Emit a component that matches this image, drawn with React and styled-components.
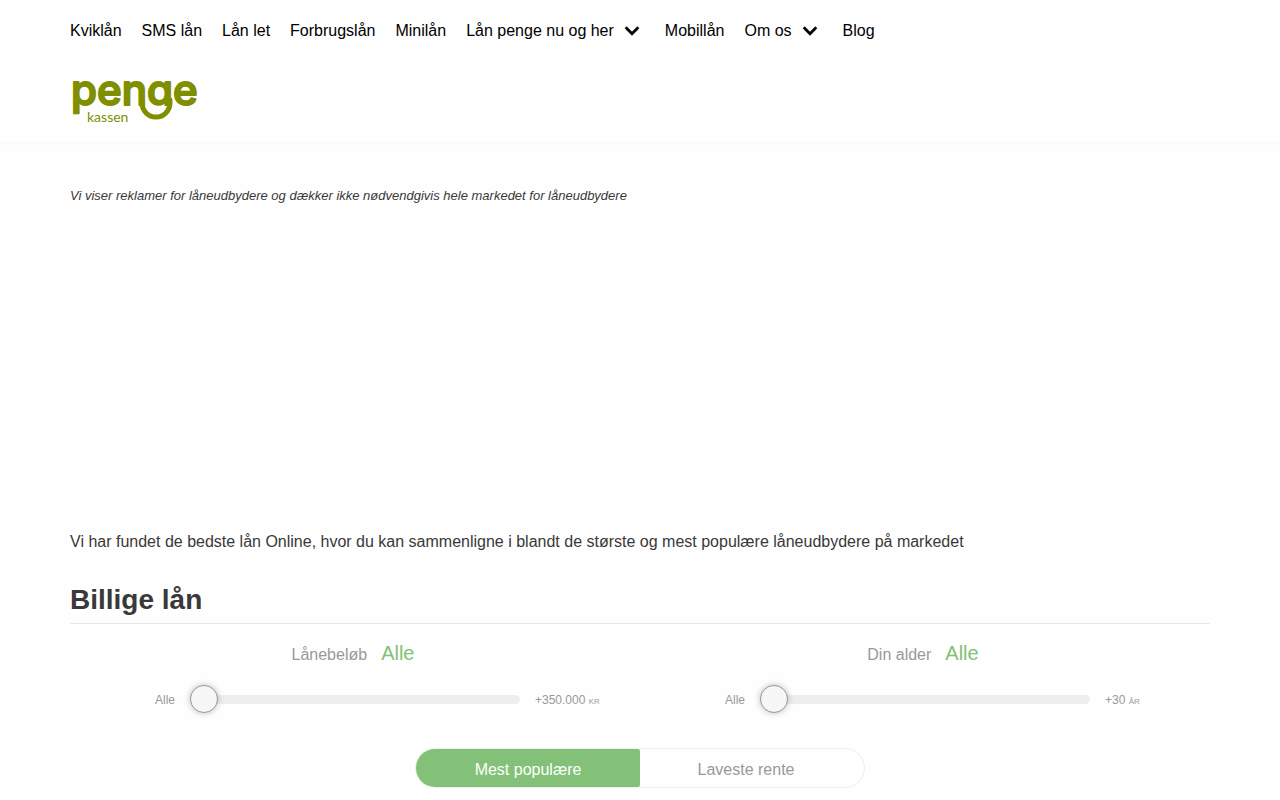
import React from "react";
import styled, { createGlobalStyle } from "styled-components";
import { FaChevronDown } from "react-icons/fa";

const GlobalStyle = createGlobalStyle`
  *, *::before, *::after { box-sizing: border-box; }
  body {
    margin: 0;
    background: #fefefe;
    color: #393939;
    font-family: "Liberation Sans", Arial, sans-serif;
    font-size: 16px;
    line-height: 24px;
  }
`;

const Container = styled.div`
  max-width: 1170px;
  margin: 0 auto;
  padding: 0 15px;
`;

const Header = styled.header`
  background: #fefefe;
  box-shadow: 0 1px 3px rgba(0, 0, 0, 0.03);
`;

const Nav = styled.nav`
  padding: 19px 0 17px;
`;

const NavList = styled.ul`
  display: flex;
  flex-wrap: wrap;
  gap: 0 20px;
  margin: 0;
  padding: 0;
  list-style: none;
`;

const NavItem = styled.li`
  display: flex;
  align-items: center;
`;

const NavLink = styled.a`
  color: #000;
  text-decoration: none;
`;

const NavToggle = styled.button`
  display: flex;
  margin: 0 5px 0 10px;
  padding: 0;
  border: 0;
  background: none;
  color: #000;
  font-size: 16px;

  svg {
    stroke: currentColor;
    stroke-width: 16px;
  }
`;

const LogoLink = styled.a`
  display: block;
  width: 134px;
  padding: 10px 0;
`;

const LogoArt = styled.svg`
  display: block;
  width: 134px;
  height: 62px;
  overflow: visible;
  fill: #7f8f00;
`;

const Wordmark = styled.text`
  font-family: Inter, sans-serif;
  font-size: 42px;
  font-weight: 500;
  stroke: #7f8f00;
  stroke-width: 2px;
  stroke-linejoin: round;
`;

const SubWordmark = styled.text`
  font-family: Lato, sans-serif;
  font-size: 14px;
`;

const Disclaimer = styled.p`
  margin: 0;
  padding: 42px 0 0;
  font-size: 13px;
  font-style: italic;
`;

const Intro = styled.p`
  margin: 0;
  padding-top: 322px;
`;

const Title = styled.h1`
  margin: 27px 0 0;
  padding-bottom: 4px;
  border-bottom: 1px solid #e7e7e7;
  font-size: 28px;
  line-height: 38px;
`;

const Filters = styled.div`
  display: grid;
  grid-template-columns: repeat(2, minmax(0, 1fr));
  padding-top: 14px;
  color: #999;
`;

const FilterHead = styled.div`
  display: flex;
  justify-content: center;
  align-items: baseline;
  gap: 14px;
  padding-right: 4px;
  line-height: 30px;
`;

const FilterValue = styled.output`
  color: #82c177;
  font-size: 20px;
`;

const SliderRow = styled.div`
  display: grid;
  grid-template-columns: 1fr minmax(0, 330px) 1fr;
  align-items: center;
  gap: 15px;
  padding-top: 15px;
  font-size: 12px;
`;

const RangeLabel = styled.span`
  padding-top: 2px;
  text-align: ${(p) => p.$align || "left"};
`;

const Unit = styled.small`
  font-size: 8px;
  line-height: 8px;
  text-transform: uppercase;
`;

const Slider = styled.input`
  appearance: none;
  width: 100%;
  height: 28px;
  margin: 0;
  background: transparent;

  &::-webkit-slider-runnable-track {
    height: 9px;
    border-radius: 5px;
    background: #eee;
  }

  &::-webkit-slider-thumb {
    appearance: none;
    width: 28px;
    height: 28px;
    margin-top: -10px;
    border: 1px solid #999;
    border-radius: 50%;
    background: #f7f7f7;
    box-shadow: 0 0 6px rgba(0, 0, 0, 0.25);
  }
`;

const SortSwitch = styled.div`
  display: grid;
  grid-template-columns: 1fr 1fr;
  max-width: 450px;
  margin: 35px auto 12px;
  overflow: hidden;
  border: 1px solid #eee;
  border-radius: 20px;
`;

const SortButton = styled.button`
  height: 38px;
  padding: 4px 0 0;
  border: 0;
  border-radius: 0 2px 2px 0;
  background: ${(p) => (p.$active ? "#82c177" : "transparent")};
  color: ${(p) => (p.$active ? "#fff" : "#999")};
  font: inherit;

  &:last-child {
    padding-right: 12px;
  }
`;

const links = [
  { label: "Kviklån" },
  { label: "SMS lån" },
  { label: "Lån let" },
  { label: "Forbrugslån" },
  { label: "Minilån" },
  { label: "Lån penge nu og her", menu: true },
  { label: "Mobillån" },
  { label: "Om os", menu: true },
  { label: "Blog" },
];

function Logo() {
  return (
    <LogoArt viewBox="0 0 134 62" role="img" aria-label="Penge kassen">
      <clipPath id="above-swoosh">
        <path d="M0 0H134V62H103V36H74V62H0Z" />
      </clipPath>
      <g clipPath="url(#above-swoosh)">
        <Wordmark x="1" y="35">penge</Wordmark>
      </g>
      <path
        d="M72 30V33A14 14 0 0 0 100 33V30"
        fill="none"
        stroke="#7f8f00"
        strokeWidth="5"
        strokeLinecap="round"
      />
      <SubWordmark x="17" y="52">kassen</SubWordmark>
    </LogoArt>
  );
}

function Filter({ id, label, max, unit, limit }) {
  return (
    <div>
      <FilterHead>
        <label htmlFor={id}>{label}</label>
        <FilterValue htmlFor={id}>Alle</FilterValue>
      </FilterHead>
      <SliderRow>
        <RangeLabel $align="right">Alle</RangeLabel>
        <Slider id={id} type="range" min="0" max={limit} defaultValue="0" />
        <RangeLabel>
          {max} <Unit>{unit}</Unit>
        </RangeLabel>
      </SliderRow>
    </div>
  );
}

export default function App() {
  const [sort, setSort] = React.useState("popular");
  return (
    <>
      <GlobalStyle />
      <Header>
        <Container>
          <Nav>
            <NavList>
              {links.map(({ label, menu }) => (
                <NavItem key={label}>
                  <NavLink href="#">{label}</NavLink>
                  {menu && (
                    <NavToggle type="button" aria-label={`Vis ${label}`}>
                      <FaChevronDown />
                    </NavToggle>
                  )}
                </NavItem>
              ))}
            </NavList>
          </Nav>
          <LogoLink href="#">
            <Logo />
          </LogoLink>
        </Container>
      </Header>
      <Container as="main">
        <Disclaimer>
          Vi viser reklamer for låneudbydere og dækker ikke nødvendgivis hele markedet for låneudbydere
        </Disclaimer>
        <Intro>
          Vi har fundet de bedste lån Online, hvor du kan sammenligne i blandt de største og mest populære låneudbydere på markedet
        </Intro>
        <Title>Billige lån</Title>
        <Filters>
          <Filter id="amount" label="Lånebeløb" max="+350.000" unit="kr" limit="350000" />
          <Filter id="age" label="Din alder" max="+30" unit="år" limit="30" />
        </Filters>
        <SortSwitch>
          <SortButton type="button" $active={sort === "popular"} onClick={() => setSort("popular")}>
            Mest populære
          </SortButton>
          <SortButton type="button" $active={sort === "rate"} onClick={() => setSort("rate")}>
            Laveste rente
          </SortButton>
        </SortSwitch>
      </Container>
    </>
  );
}
